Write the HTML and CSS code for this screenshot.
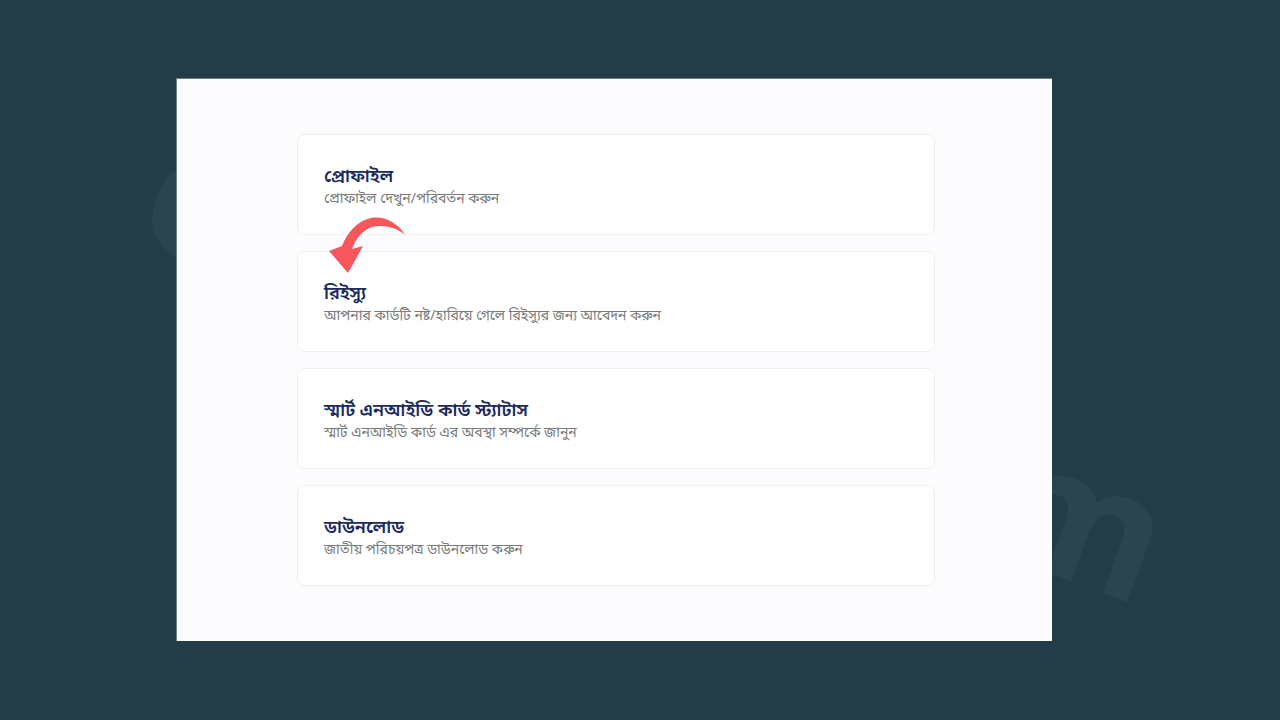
FILE: index.html
```html
<!DOCTYPE html>
<html lang="bn">
<head>
<meta charset="utf-8">
<title>সেবাসমূহ</title>
<link rel="stylesheet" href="styles.css">
</head>
<body>
<div class="watermark">ekhon.com</div>
<main class="panel">
  <div class="list">
    <a class="card" href="#">
      <span class="title">প্রোফাইল</span>
      <span class="sub">প্রোফাইল দেখুন/পরিবর্তন করুন</span>
    </a>
    <a class="card" href="#">
      <span class="title">রিইস্যু</span>
      <span class="sub">আপনার কার্ডটি নষ্ট/হারিয়ে গেলে রিইস্যুর জন্য আবেদন করুন</span>
    </a>
    <a class="card" href="#">
      <span class="title">স্মার্ট এনআইডি কার্ড স্ট্যাটাস</span>
      <span class="sub">স্মার্ট এনআইডি কার্ড এর অবস্থা সম্পর্কে জানুন</span>
    </a>
    <a class="card" href="#">
      <span class="title">ডাউনলোড</span>
      <span class="sub">জাতীয় পরিচয়পত্র ডাউনলোড করুন</span>
    </a>
  </div>
</main>
<svg class="arrow" viewBox="325 212 90 65" width="90" height="65" aria-hidden="true">
  <path d="M405 235 C397 222 384 216 371 218 C357 221 347 233 342 246 L329 251 L348 273 L363 246 L352 249 C356 238 363 230 372 227 C385 224 397 228 405 235 Z" fill="#f7575a"/>
</svg>
</body>
</html>
```

FILE: styles.css
```css
html, body {
  margin: 0;
  height: 100%;
}
body {
  background: #223c48;
  padding: 78px 0 0 176px;
  box-sizing: border-box;
  position: relative;
  overflow: hidden;
  font-family: "Noto Sans Bengali", "Noto Sans", "Liberation Sans", sans-serif;
}
.watermark {
  position: absolute;
  left: 156px;
  top: 88px;
  font-family: "Open Sans", sans-serif;
  font-weight: 700;
  font-size: 176px;
  letter-spacing: 12px;
  line-height: 1;
  color: rgba(255, 255, 255, 0.045);
  transform-origin: 0 50%;
  transform: rotate(20deg);
  white-space: nowrap;
}
.panel {
  position: relative;
  width: 876px;
  height: 563px;
  box-sizing: border-box;
  background: #fcfbfe;
  border-top: 1px solid #6d808a;
  border-left: 1px solid #6d808a;
  padding: 55px 0 0 120px;
}
.list {
  width: 638px;
  display: flex;
  flex-direction: column;
  gap: 16px;
}
.card {
  display: flex;
  flex-direction: column;
  justify-content: center;
  height: 101px;
  box-sizing: border-box;
  padding: 5px 26px 0;
  background: #ffffff;
  border: 1px solid #efeef1;
  border-radius: 8px;
  text-decoration: none;
}
.title {
  font-size: 18px;
  font-weight: 600;
  color: #1a2b5e;
  line-height: 24px;
}
.sub {
  font-size: 14px;
  color: #7b7b7b;
  line-height: 20px;
  margin-top: 1px;
}
.arrow {
  position: absolute;
  left: 325px;
  top: 212px;
}
```
